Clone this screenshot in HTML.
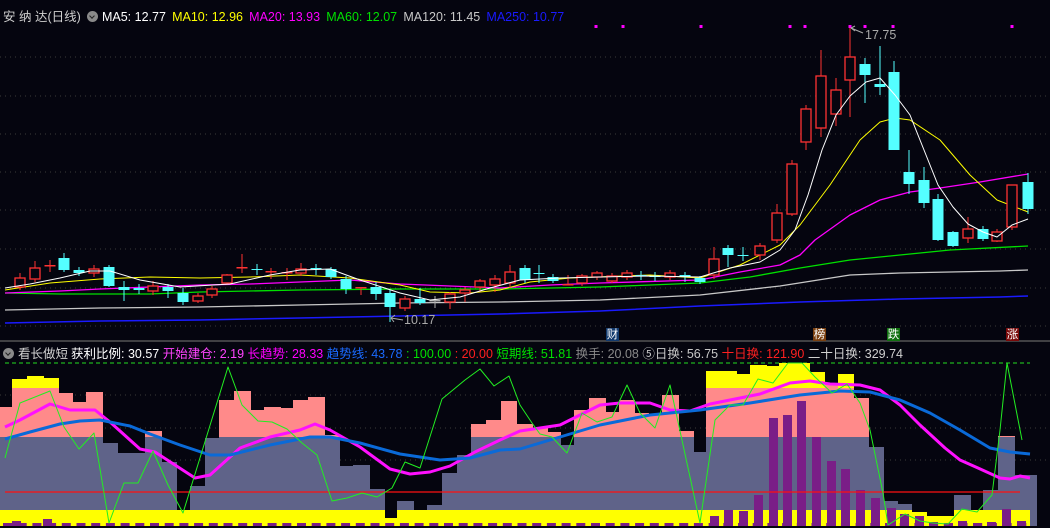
<!DOCTYPE html>
<html><head><meta charset="utf-8">
<style>
html,body{margin:0;padding:0;background:#05050f;overflow:hidden}
#w{position:relative;width:1050px;height:528px;background:#05050f;font-family:"Liberation Sans","Noto Sans CJK SC",sans-serif;font-size:12.5px}
.hd{position:absolute;left:3px;white-space:nowrap;letter-spacing:0}
.hd span{margin-right:5px}
#h1 span{margin-right:6.2px}
#h2 span{margin-right:3.5px}
.ic{display:inline-block;width:11px;height:11px;border-radius:50%;background:#8a8a8a;vertical-align:-1px;margin-right:4px;position:relative}
.ic:after{content:"";position:absolute;left:3px;top:2.5px;width:3px;height:3px;border-right:1.5px solid #222;border-bottom:1.5px solid #222;transform:rotate(45deg)}
.tag{position:absolute;top:328px;width:13px;height:13px;font-size:11.5px;line-height:13px;text-align:center;color:#fff;font-family:"Noto Sans CJK SC",sans-serif}
svg{position:absolute;left:0;top:0}
</style></head><body><div id="w">
<svg id="s" width="1050" height="528" xmlns="http://www.w3.org/2000/svg"></svg>
<div class="hd" id="h1" style="top:6px"><span style="color:#d0d0d0">安 纳 达(日线)</span><i class="ic"></i><span style="color:#fff">MA5: 12.77</span><span style="color:#ffff00">MA10: 12.96</span><span style="color:#ff00ff">MA20: 13.93</span><span style="color:#00e000">MA60: 12.07</span><span style="color:#c8c8c8">MA120: 11.45</span><span style="color:#1a1aff">MA250: 10.77</span></div>
<div class="hd" id="h2" style="top:343px"><i class="ic"></i><span style="color:#d0d0d0;margin-right:3px">看长做短</span><span style="color:#fff">获利比例: 30.57</span><span style="color:#ff44ff">开始建仓: 2.19</span><span style="color:#ff00ff">长趋势: 28.33</span><span style="color:#1a6aff">趋势线: 43.78</span><span style="color:#00e000">: 100.00</span><span style="color:#ff2020">: 20.00</span><span style="color:#00e000">短期线: 51.81</span><span style="color:#8a8a8a">换手: 20.08</span><span style="color:#c8c8c8">⑤日换: 56.75</span><span style="color:#ff2020">十日换: 121.90</span><span style="color:#d0d0d0">二十日换: 329.74</span></div>
<div class="tag" style="left:606px;background:#123a6e">财</div>
<div class="tag" style="left:813px;background:#7a4010">榜</div>
<div class="tag" style="left:887px;background:#107010">跌</div>
<div class="tag" style="left:1006px;background:#7a0a0a">涨</div>
</div>
<script>
var s=document.getElementById('s'),h='';
function ln(x1,y1,x2,y2,c,w,d){h+='<line x1="'+x1+'" y1="'+y1+'" x2="'+x2+'" y2="'+y2+'" stroke="'+c+'" stroke-width="'+(w||1)+'"'+(d?' stroke-dasharray="'+d+'"':'')+'/>';}
function rc(x,y,w,hh,c){h+='<rect x="'+x+'" y="'+y+'" width="'+w+'" height="'+hh+'" fill="'+c+'"/>';}
function pl(p,c,w){var t='';for(var i=0;i<p.length;i+=2)t+=p[i]+','+p[i+1]+' ';h+='<polyline points="'+t+'" fill="none" stroke="'+c+'" stroke-width="'+w+'" stroke-linejoin="round"/>';}
[57,96,134,172,210,249,288,326].forEach(function(y){ln(0,y,1050,y,'#3a3a3a',1,'1 4');});
ln(0,341,1050,341,'#555',1.5);
ln(5,363,1030,363,'#22dd22',1,'4 3');
[395,428,460].forEach(function(y){ln(0,y,1050,y,'#3a3a3a',1,'1 4');});
var B=[[0,12,407],[12,27,388],[27,44,388],[44,59,388],[59,73,393],[73,86,402],[86,103,392],[103,118,443],[118,145,453],[145,162,431],[162,177,462],[177,190,511],[190,205,486],[205,219,438],[219,234,400],[234,251,391],[251,264,410],[264,281,407],[281,293,408],[293,308,400],[308,325,397],[325,340,435],[340,353,466],[353,370,465],[370,385,489],[385,397,518],[397,414,501],[414,427,513],[427,442,505],[442,457,473],[457,471,455],[471,486,424],[486,501,420],[501,517,401],[517,533,424],[533,548,428],[548,561,432],[561,574,445],[574,589,410],[589,606,398],[606,619,412],[619,635,400],[635,649,413],[649,662,414],[662,679,395],[679,694,431],[694,706,452],[706,737,388],[737,750,388],[750,767,388],[767,779,388],[779,810,388],[810,825,388],[825,838,384],[838,854,384],[854,869,398],[869,884,447],[884,898,501],[898,912,504],[912,927,512],[927,954,516],[954,971,495],[971,983,511],[983,998,490],[998,1015,436],[1015,1037,475]];
B.forEach(function(b){var t=b[2];if(t<437){rc(b[0],t,b[1]-b[0],437-t,'#ff8a8a');rc(b[0],437,b[1]-b[0],89,'#5f6389');}else rc(b[0],t,b[1]-b[0],526-t,'#5f6389');});
var Y=[[12,27,379],[27,44,376],[44,59,378],[706,737,371],[737,750,374],[750,767,365],[767,779,366],[779,810,363],[810,825,372],[838,854,374]];
Y.forEach(function(b){rc(b[0],b[2],b[1]-b[0],388-b[2],'#ffff00');});
var ys=[[0,385,510],[385,397,518],[397,912,510],[912,927,512],[927,954,516],[954,1030,510]];
ys.forEach(function(b){rc(b[0],b[2],b[1]-b[0],526-b[2],'#ffff00');});
for(var x=3;x<1030;x+=14.7)rc(x,523,9,3,'#7a1e87');
var P=[[710,516],[724,510],[739,511],[754,495],[769,418],[783,415],[797,401],[812,437],[827,461],[841,469],[856,490],[871,498],[887,508],[900,514],[915,516],[929,522],[944,523],[958,521],[973,523],[987,522],[1002,509],[1017,521]];
P.forEach(function(p){rc(p[0],p[1],9,526-p[1],'#7a1e87');});
rc(12,521,9,5,'#7a1e87');rc(43,519,9,7,'#7a1e87');
ln(5,492,1020,492,'#ff1010',1.3);
pl([5,427,20,420,50,404,70,410,95,410,110,422,140,449,155,452,175,465,195,478,210,475,240,448,270,437,300,430,315,424,330,430,360,447,390,469,410,474,430,472,450,466,475,452,500,440,520,431,540,428,560,425,600,405,620,403,650,403,670,410,690,411,710,404,730,400,760,394,790,383,810,381,830,384,860,385,880,390,900,405,920,425,945,448,960,460,978,468,1000,478,1010,479,1020,476,1030,478],'#ff10ff',3);
pl([5,439,30,432,60,424,80,421,100,420,130,426,150,434,180,445,210,455,230,455,270,445,310,437,330,437,360,443,400,454,440,460,470,458,500,450,520,449,560,437,600,425,650,415,700,410,750,403,800,395,840,391,870,392,900,400,930,413,960,430,990,448,1010,452,1030,454],'#0a6ad8',3);
pl([5,458,20,403,50,391,64,427,79,449,94,433,109,523,124,483,138,483,153,451,168,485,183,513,228,367,242,405,258,421,272,422,287,429,302,443,317,455,332,501,347,498,362,493,377,497,392,488,405,462,420,468,442,399,465,380,480,369,494,386,509,376,520,405,532,423,540,434,552,437,567,453,582,413,597,422,612,417,627,385,640,413,655,428,670,385,700,523,715,420,730,405,743,405,758,379,773,383,788,363,802,363,815,377,832,393,847,384,860,403,870,430,883,493,888,525,905,514,920,521,933,523,948,524,962,509,977,512,992,495,1000,430,1007,363,1022,440],'#22ee22',1);
pl([5,310,100,308,200,307,300,305,400,303,500,302,600,300,700,295,780,286,850,275,900,273,1000,271,1028,270],'#c8c8c8',1.3);
pl([5,323,100,321,200,320,300,318,400,316,500,314,600,311,700,306,800,302,900,299,1000,297,1028,296],'#1a1aff',1.5);
pl([5,293,60,294,150,294,200,292,300,290,400,289,500,289,600,287,700,283,750,277,800,268,850,260,900,255,950,250,1028,246],'#00e000',1.3);
pl([5,293,60,291,100,289,150,287,200,285,250,284,300,282,350,280,400,284,450,286,500,288,550,285,600,283,700,280,740,272,780,265,800,255,815,240,850,215,880,200,910,192,940,188,980,182,1028,174],'#ff00ff',1.3);
pl([5,290,50,283,100,279,150,277,200,278,250,277,300,275,350,278,400,285,430,292,470,293,500,290,530,282,570,278,650,275,700,278,740,265,780,245,800,225,830,185,860,140,880,122,895,118,910,120,940,140,970,175,997,200,1028,212],'#ffff00',1);
var C=[[20,278,287,273,290,1],[35,268,279,261,282,1],[50,265,266,260,272,1],[64,258,270,253,272,0],[79,270,273,267,276,0],[94,269,273,265,277,1],[109,267,286,265,287,0],[124,287,290,281,301,0],[139,288,290,284,294,0],[153,286,291,281,295,1],[168,287,291,284,298,0],[183,293,302,288,305,0],[198,296,301,293,303,1],[212,289,295,286,298,1],[227,275,283,274,285,1],[242,267,268,254,273,1],[257,269,270,264,275,0],[271,271,273,268,279,1],[287,272,274,268,280,1],[301,269,273,263,276,1],[316,268,269,264,275,0],[331,269,277,267,279,0],[346,279,289,276,294,0],[361,287,288,287,295,1],[376,287,294,282,300,0],[390,293,307,290,322,0],[405,299,308,296,311,1],[420,299,303,288,305,0],[435,300,301,296,308,2],[450,294,302,292,309,1],[465,290,293,287,302,1],[480,281,287,279,292,1],[495,279,285,275,292,1],[510,272,283,265,288,1],[525,268,280,265,283,0],[539,273,274,265,283,0],[553,277,281,274,283,0],[568,284,286,275,285,1],[582,276,283,274,286,1],[597,273,277,271,280,1],[612,276,281,273,283,1],[627,273,277,270,280,1],[641,275,276,271,280,0],[655,276,277,272,281,0],[670,273,277,270,280,1],[685,275,277,272,282,0],[700,278,282,276,284,0],[714,259,275,247,279,1],[728,248,255,245,267,0],[743,255,256,247,261,0],[760,246,255,243,260,1],[777,213,240,204,243,1],[792,164,214,160,216,1],[806,109,142,105,150,1],[821,76,128,50,137,1],[836,90,114,78,126,1],[850,57,80,27,117,1],[865,64,75,58,103,0],[880,84,87,46,95,0],[894,72,150,61,150,0],[909,172,184,150,194,0],[924,180,203,167,208,0],[938,199,240,194,241,0],[953,232,246,231,247,0],[968,229,238,217,243,1],[983,229,239,226,241,0],[997,232,241,229,242,1],[1012,185,227,185,230,1],[1028,182,209,173,214,0]];
C.forEach(function(c){var x=c[0],col=c[5]==1?'#ff3232':(c[5]==2?'#aaaaaa':'#54ffff');ln(x,c[3],x,c[4],col,1);var hh=Math.max(c[2]-c[1],1);if(c[5]==0){rc(x-5.5,c[1],11,hh,col);}else if(hh<=2){rc(x-5.5,c[1],11,1.5,col);}else{h+='<rect x="'+(x-5)+'" y="'+c[1]+'" width="10" height="'+hh+'" fill="#05050f" stroke="'+col+'" stroke-width="1.3"/>';}});
pl([5,288,30,284,60,278,90,271,110,271,140,280,180,287,230,284,270,275,300,270,330,269,360,280,400,293,430,300,460,297,490,288,520,280,560,278,600,277,650,276,700,277,730,268,760,262,780,250,795,230,808,195,822,150,836,115,850,96,866,82,880,78,895,95,910,115,922,145,938,185,953,207,968,224,983,232,997,237,1012,225,1028,219],'#ffffff',1);
[701,790,805,850,865,893,1012,596,623].forEach(function(x){rc(x-1.5,25,3,3,'#ff00ff');});
ln(851,28,863,33,'#aaa',1);ln(851,28,855,26,'#aaa',1);ln(851,28,855,31,'#aaa',1);
h+='<text x="865" y="39" fill="#aaaaaa" font-family="Liberation Sans" font-size="12.5">17.75</text>';
ln(391,318,403,320,'#aaa',1);ln(391,318,395,315,'#aaa',1);ln(391,318,394,322,'#aaa',1);
h+='<text x="404" y="324" fill="#aaaaaa" font-family="Liberation Sans" font-size="12.5">10.17</text>';
s.innerHTML=h;
</script>
</body></html>
